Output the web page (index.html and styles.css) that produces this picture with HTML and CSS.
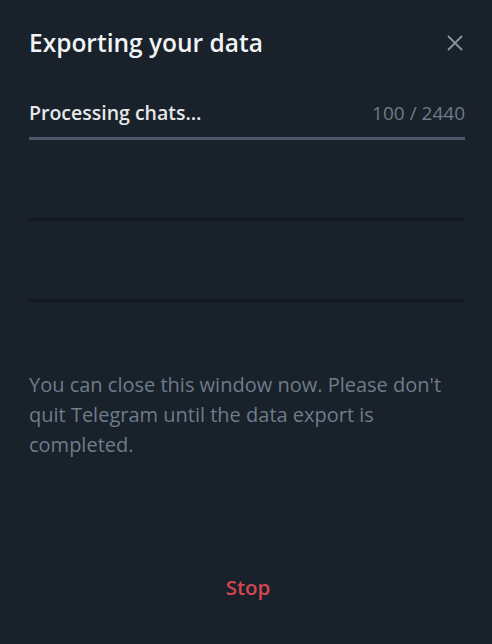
FILE: index.html
```html
<!DOCTYPE html>
<html lang="en">
	<head>
		<meta charset="utf-8">
		<title>Exporting your data</title>
		<link rel="stylesheet" href="styles.css">
	</head>
	<body>
		<main class="box">
			<div class="header">
				<h1 class="title">Exporting your data</h1>
				<button class="close" aria-label="Close">
					<svg width="16" height="16" viewBox="0 0 16 16">
						<path d="M1 1 L15 15 M15 1 L1 15" stroke="#8a939c" stroke-width="1.8" fill="none"/>
					</svg>
				</button>
			</div>
			<div class="row">
				<div class="row-info">
					<span class="row-label">Processing chats…</span>
					<span class="row-count">100 / 2440</span>
				</div>
				<div class="track track-active"><div class="fill" style="width: 4%"></div></div>
			</div>
			<div class="row">
				<div class="row-info"></div>
				<div class="track"></div>
			</div>
			<div class="row">
				<div class="row-info"></div>
				<div class="track"></div>
			</div>
			<p class="about">You can close this window now. Please don't quit Telegram until the data export is completed.</p>
			<div class="footer">
				<button class="stop">Stop</button>
			</div>
		</main>
	</body>
</html>
```

FILE: styles.css
```css
html, body {
	margin: 0px;
	padding: 0px;
}

body {
	background-color: #19212b;
	font-family: "Open Sans", "Noto Sans", sans-serif;
	width: 492px;
	height: 644px;
	overflow: hidden;
}

.box {
	padding: 28px 27px 0px 29px;
	display: flex;
	flex-flow: column;
}

.header {
	display: flex;
	justify-content: space-between;
	align-items: center;
	height: 30px;
}

.title {
	margin: 0px;
	font-size: 24.5px;
	font-weight: 600;
	line-height: 30px;
	color: #f2f3f4;
}

.close {
	background: none;
	border: none;
	padding: 0px;
	margin-right: 2px;
	width: 16px;
	height: 16px;
	display: flex;
}

.row {
	display: flex;
	flex-flow: column;
}

.row-info {
	display: flex;
	justify-content: space-between;
	align-items: baseline;
	margin-top: 42px;
	height: 26px;
	line-height: 26px;
}

.row-label {
	font-size: 19.5px;
	font-weight: 600;
	color: #e6e8ea;
}

.row-count {
	font-size: 19px;
	color: #6e7b88;
}

.track {
	height: 3px;
	margin-top: 10px;
	background-color: #121920;
}

.track-active {
	background-color: #4b5867;
	margin-top: 11px;
}

.fill {
	height: 100%;
	background-color: #4b5867;
}

.about {
	margin: 68px 0px 0px 0px;
	font-size: 20px;
	line-height: 30px;
	color: #6f7c8a;
}

.footer {
	display: flex;
	justify-content: center;
	margin-top: 113px;
}

.stop {
	background: none;
	border: none;
	font-family: inherit;
	font-size: 20.5px;
	font-weight: 600;
	color: #d3464f;
	padding: 0px;
	margin-left: 2px;
}
```
